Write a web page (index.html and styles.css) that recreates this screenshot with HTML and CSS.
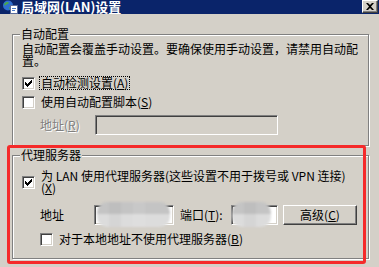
FILE: index.html
```html
<!DOCTYPE html>
<html>
<head>
<meta charset="utf-8">
<title>局域网(LAN)设置</title>
<link rel="stylesheet" href="styles.css">
</head>
<body>
<div class="dialog">
  <div class="caption">
    <svg class="caption-icon" width="16" height="14" viewBox="0 0 16 14">
      <circle cx="6" cy="5.5" r="5" fill="#2f6fd0"/>
      <path d="M2.5 3.5c1-1.5 3-2 4-1.2.8.8-.4 1.8-1.6 2-1 .2-1.4 1.4-2.2 1.2-.8-.3-.6-1.2-.2-2z" fill="#4aa84a"/>
      <path d="M7 7.5c1-.5 2.3-.3 2.5.6.1.9-1 1.4-1.8 1.2z" fill="#4aa84a"/>
      <rect x="8.5" y="5.5" width="7" height="8" fill="#fff" stroke="#5a6c9c"/>
      <path d="M10 8.5h4M10 10.5h3" stroke="#4a7ac8"/>
    </svg>
    <span class="caption-text">局域网(LAN)设置</span>
    <span class="caption-close">
      <svg width="8" height="7" viewBox="0 0 8 7"><path d="M0 0h2l2 2 2-2h2l-3 3.5 3 3.5h-2l-2-2-2 2h-2l3-3.5z"/></svg>
    </span>
  </div>

  <fieldset class="group">
    <legend>自动配置</legend>
    <p class="hint">自动配置会覆盖手动设置。要确保使用手动设置，请禁用自动配<br>置。</p>
    <div class="opt first">
      <span class="box"><svg width="7" height="7" viewBox="0 0 7 7"><path d="M0 2h1v3h-1zM1 3h1v3h-1zM2 4h1v3h-1zM3 3h1v3h-1zM4 2h1v3h-1zM5 1h1v3h-1zM6 0h1v3h-1z"/></svg></span>
      <label class="focus">自动检测设置(<u>A</u>)</label>
    </div>
    <div class="opt">
      <span class="box"></span>
      <label>使用自动配置脚本(<u>S</u>)</label>
    </div>
    <div class="field">
      <span class="field-label disabled">地址(<u>R</u>)</span>
      <span class="edit off wide"></span>
    </div>
  </fieldset>

  <fieldset class="group proxy">
    <legend>代理服务器</legend>
    <div class="opt two-line">
      <span class="box"><svg width="7" height="7" viewBox="0 0 7 7"><path d="M0 2h1v3h-1zM1 3h1v3h-1zM2 4h1v3h-1zM3 3h1v3h-1zM4 2h1v3h-1zM5 1h1v3h-1zM6 0h1v3h-1z"/></svg></span>
      <label>为 LAN 使用代理服务器(这些设置不用于拨号或 VPN 连接)<br>(<u>X</u>)</label>
    </div>
    <div class="field">
      <span class="field-label short">地址</span>
      <span class="edit addr"><span class="smudge smudge-addr"></span></span>
      <span class="port-label">端口(<u>T</u>):</span>
      <span class="edit port"><span class="smudge smudge-port"></span></span>
      <button class="btn">高级(<u>C</u>)</button>
    </div>
    <div class="opt sub">
      <span class="box"></span>
      <label>对于本地地址不使用代理服务器(<u>B</u>)</label>
    </div>
  </fieldset>

  <div class="mark"></div>
</div>
</body>
</html>
```

FILE: styles.css
```css
body {margin:0; background:#d4d0c8}
.dialog {position:relative; width:379px; height:267px; overflow:hidden; background:#d4d0c8; font:12px/12px "Noto Sans CJK SC", sans-serif; color:#000}

.caption {display:flex; align-items:center; height:14px; padding-left:2px; background:#0a246a}
.caption-icon {display:block; flex:none}
.caption-text {margin-left:3px; font-size:13px; line-height:14px; color:#fff; font-weight:bold; white-space:nowrap}
.caption-close {display:flex; align-items:center; justify-content:center; align-self:flex-start; box-sizing:border-box; width:16px; height:13px; margin:0 1px 0 auto; background:#d4d0c8; border:1px solid; border-color:#fff #404040 #404040 #fff; box-shadow:inset -1px -1px #808080}
.caption-close svg {display:block}

.group {display:block; box-sizing:border-box; width:357px; min-width:0; margin:14px 0 0 12px; padding:3px 9px 10px; border:1px solid #808080; box-shadow:inset 1px 1px #fff, 1px 1px #fff}
.group legend {margin-left:-2px; padding:0 1px; line-height:12px; background:#d4d0c8}
.proxy {margin-top:3px; padding-top:8px; padding-bottom:11px}

.hint {margin:0; white-space:nowrap}

.opt {display:flex; align-items:center; height:16px; margin-top:3px}
.opt label {margin-left:4px; padding:0 1px; border:1px dotted transparent; white-space:nowrap; line-height:12px}
.opt .focus {border-color:#000}
.first {margin-top:8px}
.two-line {height:auto; margin-top:0}
.sub {margin-top:6px; padding-left:18px}

.box {display:flex; align-items:center; justify-content:center; flex:none; box-sizing:border-box; width:13px; height:13px; background:#fff; border:1px solid; border-color:#808080 #fff #fff #808080; box-shadow:inset 1px 1px #404040, inset -1px -1px #d4d0c8}
.box svg {display:block}

.field {display:flex; align-items:center; height:20px; margin-top:5px; padding-left:18px}
.proxy .field {margin-top:10px}
.field-label {flex:none; width:55px; white-space:nowrap}
.field-label.short {width:54px}
.disabled {color:#808080; text-shadow:1px 1px 0 #fff}
.port-label {flex:none; width:51px; margin-left:6px; white-space:nowrap}

.edit {position:relative; flex:none; box-sizing:border-box; height:20px; background:#fff; border:1px solid; border-color:#808080 #fff #fff #808080; box-shadow:inset 1px 1px #404040, inset -1px -1px #d4d0c8}
.edit.off {background:#d4d0c8}
.wide {width:183px}
.addr {width:80px}
.port {width:47px}

.smudge {position:absolute; top:-4px; bottom:-3px; border-radius:10px; background:linear-gradient(90deg, transparent 0 12px, rgba(0,0,0,.03) 12px 24px, transparent 24px 36px, rgba(255,255,255,.08) 36px 48px, transparent 48px), linear-gradient(#c4c4c4 50%, #dcdcdc 50%); filter:blur(1px)}
.smudge-addr {left:2px; right:3px}
.smudge-port {left:0; right:6px}

.btn {flex:none; box-sizing:border-box; width:74px; height:20px; margin-left:5px; padding:0; font:inherit; line-height:12px; color:#000; background:#d4d0c8; border:1px solid; border-color:#fff #404040 #404040 #fff; box-shadow:inset -1px -1px #808080}

.mark {position:absolute; left:7px; top:145px; width:359px; height:119px; box-sizing:border-box; border:3px solid #f52a2a; border-radius:3px}
```
